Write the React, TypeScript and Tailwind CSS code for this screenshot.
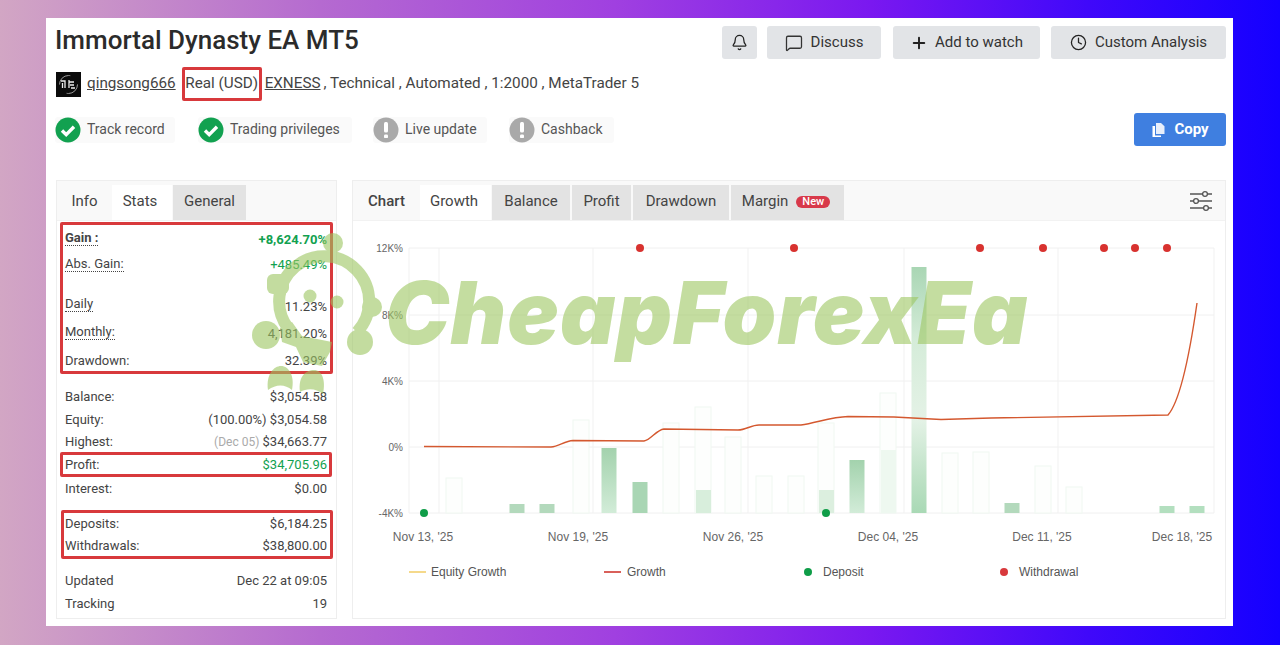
import React from "react";
import { Bell, Clock, MessageSquare, Plus } from "lucide-react";

const faint: [number, number][] = [[453,478],[580,420],[670,423],[702,407],[732,437],[763,476],[795,476],[825,423],[887,393],[949,453],[980,452],[1042,466],[1073,487]];
const solid: [number, number, string][] = [[516,504,"#b3d9bc"],[546,504,"#b3d9bc"],[608,448,"url(#fade)"],[639,482,"#a9d6b4"],[856,460,"url(#fade)"],[918,267,"url(#bar)"],[1011,503,"#b3d9bc"],[1166,506,"#b3dfbf"],[1196,506,"#b3dfbf"]];
const reds = [639,793,979,1042,1103,1134,1166];
const xTicks: [number, string][] = [[422,"Nov 13, '25"],[577,"Nov 19, '25"],[732,"Nov 26, '25"],[887,"Dec 04, '25"],[1041,"Dec 11, '25"],[1181,"Dec 18, '25"]];
const yTicks: [number, string][] = [[248,"12K%"],[315,"8K%"],[381,"4K%"],[447,"0%"],[513,"-4K%"]];

function Check() {
  return (
    <svg width="26" height="26" viewBox="0 0 26 26" className="shrink-0">
      <circle cx="13" cy="13" r="12.5" fill="#12a150" />
      <path d="M7 13.5l4.2 4.2L19 9.8" fill="none" stroke="#fff" strokeWidth="3.4" />
    </svg>
  );
}

function Warn() {
  return (
    <svg width="26" height="26" viewBox="0 0 26 26" className="shrink-0">
      <circle cx="13" cy="13" r="12.5" fill="#a9a9a9" />
      <rect x="11" y="5" width="4" height="10.5" rx="1.5" fill="#fff" />
      <rect x="11" y="17.5" width="4" height="3.6" rx="1.2" fill="#fff" />
    </svg>
  );
}

function Chip({ ok, label, cls }: { ok: boolean; label: string; cls: string }) {
  return (
    <div className={`flex items-center h-[26px] bg-[#fafafa] rounded-[3px] text-[14px] text-[#555] ${cls}`}>
      {ok ? <Check /> : <Warn />}
      <span className="ml-[6px] whitespace-nowrap">{label}</span>
    </div>
  );
}

function Row({ label, value, cls = "", lblCls = "", valCls = "" }: { label: string; value: React.ReactNode; cls?: string; lblCls?: string; valCls?: string }) {
  return (
    <div className={`flex justify-between items-center text-[13px] text-[#444] ${cls}`}>
      <span className={lblCls}>{label}</span>
      <span className={valCls}>{value}</span>
    </div>
  );
}

const dotted = "border-b border-dotted border-[#444] leading-[15px]";

function Tab({ label, cls, children }: { label: string; cls: string; children?: React.ReactNode }) {
  return (
    <div className={`flex items-center justify-center h-[35px] pb-[2px] text-[15px] text-[#444] ${cls}`}>
      {label}
      {children}
    </div>
  );
}

function Btn({ icon, label, cls, gap = "ml-[8px]" }: { icon: React.ReactNode; label: string; cls: string; gap?: string }) {
  return (
    <button className={`flex items-center justify-center h-[33px] rounded-[3px] bg-[#e2e4e7] text-[15px] text-[#333] ${cls}`}>
      {icon}
      <span className={`${gap} whitespace-nowrap`}>{label}</span>
    </button>
  );
}

function Chart() {
  return (
    <svg width="874" height="325" viewBox="352 233 874 325" fontFamily="'Liberation Sans', Arial, sans-serif">
      <defs>
        <linearGradient id="bar" x1="0" y1="0" x2="0" y2="1">
          <stop offset="0" stopColor="#a9d6b4" />
          <stop offset="0.3" stopColor="#d5ecd9" />
          <stop offset="0.62" stopColor="#e4f2e6" />
          <stop offset="0.85" stopColor="#bfe2c7" />
          <stop offset="1" stopColor="#a9d9b5" />
        </linearGradient>
        <linearGradient id="fade" x1="0" y1="0" x2="0" y2="1">
          <stop offset="0" stopColor="#a3d2ad" />
          <stop offset="1" stopColor="#d2ecd8" />
        </linearGradient>
      </defs>
      {yTicks.map(([y]) => <line key={y} x1="408" x2="1213" y1={y} y2={y} stroke="#f0f0f0" />)}
      {[408,438,592,747,903,1057,1213].map((x) => <line key={x} x1={x} x2={x} y1="248" y2="513" stroke="#f1f1f1" />)}
      {faint.map(([x, y]) => (
        <rect key={x} x={x - 8} y={y} width="16" height={513 - y} fill="#fdfefd" stroke="#f0f8f1" />
      ))}
      <rect x="695" y="490" width="15" height="23" fill="#d8eedc" />
      <rect x="818" y="490" width="15" height="23" fill="#dcefdf" />
      <rect x="880" y="450" width="15" height="63" fill="#eef8f0" />
      {solid.map(([x, y, f]) => (
        <rect key={x} x={x - 7.5} y={y} width="15" height={513 - y} fill={f} />
      ))}
      <path
        d="M423 446.500L550 447C558 446 564 441 572 440.500L643 441C650 440 655 430 663 429L737 430C745 430 750 425 758 425L800 425C815 423 830 417 847 416.500L893 417L940 419.500L990 418L1167 415C1180 400 1190 345 1196 303"
        fill="none"
        stroke="#d4582f"
        strokeWidth="1.400"
      />
      {reds.map((x) => <circle key={x} cx={x} cy="248" r="4" fill="#d8322f" />)}
      <circle cx="423" cy="513" r="4" fill="#0f9d48" />
      <circle cx="825" cy="513" r="4" fill="#0f9d48" />
      {yTicks.map(([y, t]) => (
        <text key={t} x="402" y={y + 4} textAnchor="end" fontSize="10" fill="#666">{t}</text>
      ))}
      {xTicks.map(([x, t]) => (
        <text key={t} x={x} y="541" textAnchor="middle" fontSize="12" fill="#666">{t}</text>
      ))}
    </svg>
  );
}

function LegendItem({ marker, label, width }: { marker: React.ReactNode; label: string; width: string }) {
  return (
    <div className={`flex items-center text-[12px] text-[#555] ${width}`}>
      {marker}
      <span className="font-['Liberation_Sans',Arial,sans-serif]">{label}</span>
    </div>
  );
}

function Mascot() {
  const c = "#9cc661";
  return (
    <svg className="absolute left-[240px] top-[220px] opacity-[0.6]" width="150" height="175" viewBox="240 220 150 175">
      <g fill={c}>
        <path d="M288 328A45 45 0 1 1 357 332" fill="none" stroke={c} strokeWidth="12" />
        <circle cx="333" cy="243" r="10" />
        <rect x="267" y="274" width="22" height="20" rx="6" />
        <circle cx="372" cy="307" r="10" />
        <circle cx="310" cy="296" r="6.500" />
        <circle cx="337" cy="302" r="6.500" />
        <circle cx="266" cy="335" r="14" />
        <circle cx="360" cy="342" r="13" />
        <path d="M280 328L292 322L302 336L332 342L330 352L322 366L303 362L296 347L282 342Z" />
        <path d="M268 390C266 374 274 366 281 366C289 366 295 376 292 390C285 384 276 384 268 390Z" />
        <path d="M300 392C298 376 306 370 314 370C322 370 326 380 323 394C316 388 307 388 300 392Z" />
      </g>
    </svg>
  );
}

export default function App() {
  return (
    <div className="relative w-[1280px] h-[645px] overflow-hidden pl-[46px] pt-[18px] font-['Roboto',sans-serif] bg-[linear-gradient(90deg,#d2a6c4_0%,#b56ad0_25%,#a040e0_48%,#7a18f0_68%,#4008fa_85%,#1400ff_100%)]">
      <div className="w-[1187px] h-[608px] bg-white pl-[9px] pr-[7px]">
        <div className="flex items-start justify-between h-[48px]">
          <h1 className="mt-[4px] text-[26px] leading-[36px] font-medium text-[#2b2b2b] whitespace-nowrap">Immortal Dynasty EA MT5</h1>
          <div className="flex mt-[8px]">
            <button className="flex items-center justify-center w-[35px] h-[33px] rounded-[3px] bg-[#e2e4e7]">
              <Bell size={17} color="#222" strokeWidth={1.8} />
            </button>
            <Btn cls="ml-[10px] w-[114px]" icon={<MessageSquare size={18} color="#333" strokeWidth={1.7} />} label="Discuss" />
            <Btn cls="ml-[12px] w-[147px]" gap="ml-[7px]" icon={<Plus size={18} color="#222" strokeWidth={2.6} />} label="Add to watch" />
            <Btn cls="ml-[11px] w-[175px]" icon={<Clock size={17} color="#222" strokeWidth={1.8} />} label="Custom Analysis" />
          </div>
        </div>

        <div className="flex items-center h-[34px] mt-[1px] text-[15.25px] text-[#444] whitespace-nowrap">
          <svg width="25" height="25" viewBox="0 0 25 25" className="ml-px shrink-0">
            <rect width="25" height="25" fill="#0b0b0b" />
            <circle cx="12.500" cy="12.500" r="9" fill="none" stroke="#999" strokeWidth="1" strokeDasharray="16 12" />
            <path d="M5 9h4v7M6.500 11v5M13 8v8M13 10h5M14 13h4M15 16h4" fill="none" stroke="#eee" strokeWidth="1.300" />
          </svg>
          <a className="ml-[6px] mb-[2px] underline">qingsong666</a>
          <span className="flex items-center justify-center ml-[6px] w-[80px] h-[34px] pb-[2px] rounded-[2px] border-[3px] border-[#d8393c]">Real (USD)</span>
          <a className="ml-[3px] mb-[2px] underline">EXNESS</a>
          <span className="ml-[3px] mb-[2px]">, Technical , Automated , 1:2000 , MetaTrader 5</span>
        </div>

        <div className="flex items-center justify-between mt-[12px] h-[33px]">
          <div className="flex">
            <Chip ok cls="w-[120px]" label="Track record" />
            <Chip ok cls="ml-[23px] w-[154px]" label="Trading privileges" />
            <Chip ok={false} cls="ml-[21px] w-[114px]" label="Live update" />
            <Chip ok={false} cls="ml-[22px] w-[105px]" label="Cashback" />
          </div>
          <button className="flex items-center justify-center w-[92px] h-[33px] rounded-[3px] bg-[#3f7fe0] text-white text-[15px] font-bold">
            <svg width="15" height="16" viewBox="0 0 15 16">
              <path d="M5 1h5l3.500 3.200V12H5Z" fill="#e8effb" />
              <path d="M1.500 4H4v9.500h6V15H1.500Z" fill="#fff" />
            </svg>
            <span className="ml-[8px]">Copy</span>
          </button>
        </div>

        <div className="flex mt-[34px] items-start">
          <div className="w-[281px] h-[439px] ml-px border border-[#eeeeee] shrink-0">
            <div className="flex h-[40px] pt-[4px] bg-[#f9f9f9] border-b border-[#f2f2f2]">
              <Tab cls="w-[55px]" label="Info" />
              <Tab cls="w-[60px] pr-[4px] bg-white" label="Stats" />
              <Tab cls="w-[73px] ml-px bg-[#e3e3e3]" label="General" />
            </div>
            <div className="ml-[3px] w-[273px] h-[152px] mt-px border-[3px] rounded-[2px] border-[#d8393c] pl-[2px] pr-[3px]">
              <Row cls="h-[25px]" label="Gain :" lblCls={`${dotted} font-bold`} value="+8,624.70%" valCls="font-bold text-[#12a150] mt-[4px]" />
              <Row cls="h-[28px]" label="Abs. Gain:" lblCls={dotted} value="+485.49%" valCls="text-[#12a150] mt-[2px]" />
              <Row cls="h-[28px] mt-[12px]" label="Daily" lblCls={dotted} value="11.23%" valCls="mt-[6px]" />
              <Row cls="h-[28px]" label="Monthly:" lblCls={dotted} value="4,181.20%" valCls="mt-[3px]" />
              <Row cls="h-[25px] pt-[5px]" label="Drawdown:" value="32.39%" />
            </div>
            <div className="pl-[8px] pr-[9px] mt-[11px]">
              <Row cls="h-[23px]" label="Balance:" value="$3,054.58" />
              <Row cls="h-[23px]" label="Equity:" value="(100.00%) $3,054.58" />
              <Row cls="h-[21px] pt-px" label="Highest:" value={<><span className="text-[#aaa] text-[12px]">(Dec 05)</span> $34,663.77</>} />
            </div>
            <div className="flex items-center ml-[3px] w-[272px] h-[25px] border-[3px] rounded-[2px] border-[#d8393c] pl-[2px] pr-[2px]">
              <Row cls="w-full" label="Profit:" value="$34,705.96" valCls="text-[#12a150]" />
            </div>
            <div className="pl-[8px] pr-[9px]">
              <Row cls="h-[23px]" label="Interest:" value="$0.00" />
            </div>
            <div className="ml-[4px] w-[272px] h-[49px] mt-[10px] border-[3px] rounded-[2px] border-[#d8393c] pl-px pr-[3px]">
              <Row cls="h-[22px]" label="Deposits:" value="$6,184.25" />
              <Row cls="h-[22px]" label="Withdrawals:" value="$38,800.00" />
            </div>
            <div className="pl-[8px] pr-[9px] mt-[10px]">
              <Row cls="h-[23px]" label="Updated" value="Dec 22 at 09:05" />
              <Row cls="h-[23px]" label="Tracking" value="19" />
            </div>
          </div>

          <div className="w-[874px] h-[439px] ml-[15px] border border-[#eeeeee] shrink-0">
            <div className="flex items-start h-[40px] pt-[4px] bg-[#f9f9f9] border-b border-[#f2f2f2]">
              <Tab cls="w-[67px] font-medium" label="Chart" />
              <Tab cls="w-[71px] pr-[3px] bg-white" label="Growth" />
              <Tab cls="w-[78px] ml-px bg-[#e3e3e3]" label="Balance" />
              <Tab cls="w-[59px] ml-[2px] bg-[#e3e3e3]" label="Profit" />
              <Tab cls="w-[96px] ml-[2px] bg-[#e3e3e3]" label="Drawdown" />
              <Tab cls="w-[113px] ml-[2px] pr-[3px] bg-[#e3e3e3]" label="Margin">
                <span className="ml-[8px] px-[6px] h-[12px] leading-[12px] rounded-full bg-[#d8394a] text-white text-[11px] font-medium">New</span>
              </Tab>
              <svg width="24" height="24" viewBox="0 0 24 24" className="ml-auto mr-[12px] mt-[5px]" fill="none" stroke="#555" strokeWidth="1.300">
                <path d="M1 4h13M18 4h5M1 11h4M9 11h14M1 18h14M19 18h4" />
                <circle cx="16" cy="4" r="2.400" />
                <circle cx="7" cy="11" r="2.400" />
                <circle cx="17" cy="18" r="2.400" />
              </svg>
            </div>
            <div className="mt-[12px]">
              <Chart />
            </div>
            <div className="flex mt-[5px] pl-[56px]">
              <LegendItem width="w-[195px]" label="Equity Growth" marker={<span className="w-[17px] h-[2px] mr-[5px] bg-[#f5d98b]" />} />
              <LegendItem width="w-[204px]" label="Growth" marker={<span className="w-[17px] h-[2px] mr-[6px] bg-[#d9605a]" />} />
              <LegendItem width="w-[192px]" label="Deposit" marker={<span className="w-[8px] h-[8px] ml-[-4px] mr-[11px] rounded-full bg-[#0f9d48]" />} />
              <LegendItem width="w-[120px]" label="Withdrawal" marker={<span className="w-[8px] h-[8px] mr-[11px] rounded-full bg-[#d8393c]" />} />
            </div>
          </div>
        </div>
      </div>

      <Mascot />
      <div className="absolute left-[385px] top-[261px] text-[86px] leading-[104px] font-black italic whitespace-nowrap tracking-[1px] text-[#9cc661]/60 font-['Inter',sans-serif]">
        CheapForexEa
      </div>
    </div>
  );
}
